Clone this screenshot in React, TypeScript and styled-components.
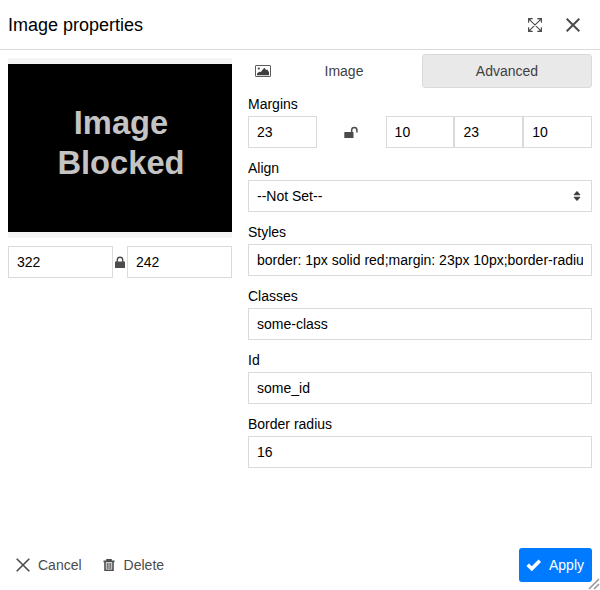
import React from "react";
import styled, { createGlobalStyle } from "styled-components";

const GlobalStyle = createGlobalStyle`
  *, *::before, *::after { box-sizing: border-box; }
  html, body { margin: 0; background: #fff; }
  body, input, button { font-family: "Liberation Sans", Arial, sans-serif; font-size: 14px; }
`;

const Dialog = styled.div`
  position: relative;
  display: flex;
  flex-direction: column;
  width: 600px;
  height: 590px;
  overflow: hidden;
  background: #fff;
  color: #000;
`;

const Header = styled.header`
  display: flex;
  align-items: center;
  justify-content: space-between;
  height: 50px;
  padding: 0 20px 0 8px;
  border-bottom: 1px solid #dadada;
`;

const Title = styled.h1`
  margin: 0;
  font-size: 18px;
  font-weight: 400;
  line-height: 22px;
`;

const HeaderActions = styled.div`
  display: flex;
  align-items: center;
  gap: 24px;
`;

const IconButton = styled.button`
  display: flex;
  padding: 0;
  border: 0;
  background: none;
  color: #4c4c4c;
`;

const Body = styled.main`
  display: grid;
  grid-template-columns: 224px 344px;
  column-gap: 16px;
  flex: 1;
  padding: 4px 8px 0;
`;

const PreviewColumn = styled.section`
  padding-top: 4px;
`;

const Preview = styled.div`
  height: 180px;
  padding: 6px 0;
  background: #f4f4f4;
`;

const Blocked = styled.div`
  display: flex;
  align-items: center;
  justify-content: center;
  height: 168px;
  padding: 0 0 10px 2px;
  background: #000;
  color: #c4c4c4;
  font-size: 32.7px;
  font-weight: 700;
  line-height: 40px;
  text-align: center;
`;

const SizeRow = styled.div`
  display: grid;
  grid-template-columns: 105px 14px 105px;
  align-items: center;
  justify-items: center;
  margin-top: 8px;
  color: #4c4c4c;
`;

const TextInput = styled.input`
  display: block;
  width: 100%;
  height: 32px;
  padding: 0 8px;
  border: 1px solid #dadada;
  border-radius: 0;
  outline: 0;
  background: #fff;
  color: #000;
`;

const Tabs = styled.div`
  display: grid;
  grid-template-columns: 1fr 1fr;
  gap: 4px;
  margin-bottom: 8px;
`;

const Tab = styled.button<{ $active?: boolean }>`
  display: flex;
  align-items: center;
  height: 34px;
  padding: 0 ${(p) => (p.$active ? "7px" : "0 0 6px")};
  border: 1px solid ${(p) => (p.$active ? "#dadada" : "transparent")};
  border-radius: 3px;
  background: ${(p) => (p.$active ? "#e9e9e9" : "transparent")};
  color: #3f3f3f;
`;

const TabLabel = styled.span`
  flex: 1;
  text-align: center;
`;

const Field = styled.div`
  margin-bottom: 12px;
`;

const Label = styled.label`
  display: block;
  height: 16px;
  margin-bottom: 4px;
  line-height: 16px;
`;

const Margins = styled.div`
  display: grid;
  grid-template-columns: repeat(5, 1fr);
  align-items: center;
  color: #4c4c4c;
`;

const LockCell = styled.div`
  display: flex;
  justify-content: center;
`;

const Select = styled.div`
  display: flex;
  align-items: center;
  justify-content: space-between;
  height: 32px;
  padding: 0 10px 0 8px;
  border: 1px solid #dadada;
`;

const Footer = styled.footer`
  display: flex;
  align-items: center;
  height: 50px;
  padding: 0 8px;
`;

const FooterButton = styled.button<{ $primary?: boolean }>`
  display: flex;
  align-items: center;
  gap: ${(p) => (p.$primary ? "7px" : "8px")};
  height: 34px;
  padding: 0 ${(p) => (p.$primary ? "8px 0 7px" : "8px")};
  margin-left: ${(p) => (p.$primary ? "auto" : "0")};
  margin-right: ${(p) => (p.$primary ? "0" : "5px")};
  border: 0;
  border-radius: 3px;
  background: ${(p) => (p.$primary ? "#007bff" : "transparent")};
  color: ${(p) => (p.$primary ? "#fff" : "#4c4c4c")};
`;

const Resizer = styled.svg`
  position: absolute;
  right: 0;
  bottom: 0;
`;

const Cross = ({ weight }: { weight: number }) => (
  <svg width="14" height="14" viewBox="0 0 14 14" fill="none" stroke="currentColor" strokeWidth={weight}>
    <path d="M.7.7 13.3 13.3M13.3.7.7 13.3" />
  </svg>
);

const Expand = () => (
  <svg width="14" height="14" viewBox="0 0 14 14" fill="none" stroke="currentColor" strokeWidth="1.1">
    <path d="M.6 4.7V.6h4.1M9.3.6h4.1v4.1M13.4 9.3v4.1H9.3M4.7 13.4H.6V9.3M.8.8l12.4 12.4M13.2.8.8 13.2" />
    <path d="M.3.3h3.9L.3 4.2ZM13.7.3v3.9L9.8.3ZM13.7 13.7H9.8l3.9-3.9ZM.3 13.7V9.8l3.9 3.9Z" fill="currentColor" fillOpacity=".45" stroke="none" />
  </svg>
);

const Picture = () => (
  <svg width="16" height="12" viewBox="0 0 16 12">
    <rect x=".5" y=".5" width="15" height="11" rx=".5" fill="none" stroke="currentColor" strokeOpacity=".85" />
    <circle cx="3.8" cy="3.5" r="1.1" fill="currentColor" />
    <path d="M2 10.2V8.4l2.3-1.7 1.5.4L9.3 2.8l1.9 2.2 1.1-.5L14 7.2v3Z" fill="currentColor" />
  </svg>
);

const Lock = () => (
  <svg width="10" height="12" viewBox="0 0 10 12">
    <path d="M2.3 6.5V4a2.7 2.7 0 0 1 5.4 0v2.5" fill="none" stroke="currentColor" strokeWidth="1.4" />
    <rect y="5.5" width="10" height="6.5" rx=".6" fill="currentColor" />
  </svg>
);

const OpenLock = () => (
  <svg width="14" height="12" viewBox="0 0 14 12">
    <path d="M7.7 6.5V4a2.6 2.6 0 0 1 5.2 0v2.4" fill="none" stroke="currentColor" strokeWidth="1.5" />
    <rect x=".3" y="6" width="9.2" height="6" rx=".5" fill="currentColor" />
  </svg>
);

const Sorter = () => (
  <svg width="8" height="10" viewBox="0 0 8 10" fill="#333" stroke="#333" strokeWidth=".8" strokeLinejoin="round">
    <path d="M4 .4 7 3.8H1ZM4 9.6 1 6.2h6Z" />
  </svg>
);

const Trash = () => (
  <svg width="12" height="12" viewBox="0 0 12 12" fill="none" stroke="currentColor">
    <path d="M.5 2.4h11M4 2V.6h4V2M2 2.8v8.5h8V2.8" strokeWidth="1.6" />
    <path d="M4.2 4v6M6 4v6M7.8 4v6" strokeWidth="1.1" />
  </svg>
);

const Check = () => (
  <svg width="16" height="12" viewBox="0 0 16 12" fill="none" stroke="currentColor" strokeWidth="3.5">
    <path d="m1.7 5.7 4.1 4.1 8-8" />
  </svg>
);

const DeleteLabel = styled.span`
  padding-left: 1px;
`;

const textFields = [
  ["Styles", "border: 1px solid red;margin: 23px 10px;border-radius: 16px"],
  ["Classes", "some-class"],
  ["Id", "some_id"],
  ["Border radius", "16"],
];

export default function App() {
  return (
    <Dialog>
      <GlobalStyle />
      <Header>
        <Title>Image properties</Title>
        <HeaderActions>
          <IconButton aria-label="Fullsize"><Expand /></IconButton>
          <IconButton aria-label="Close"><Cross weight={2} /></IconButton>
        </HeaderActions>
      </Header>
      <Body>
        <PreviewColumn>
          <Preview>
            <Blocked>Image<br />Blocked</Blocked>
          </Preview>
          <SizeRow>
            <TextInput defaultValue="322" />
            <Lock />
            <TextInput defaultValue="242" />
          </SizeRow>
        </PreviewColumn>
        <section>
          <Tabs>
            <Tab><Picture /><TabLabel>Image</TabLabel></Tab>
            <Tab $active><TabLabel>Advanced</TabLabel></Tab>
          </Tabs>
          <Field>
            <Label>Margins</Label>
            <Margins>
              <TextInput defaultValue="23" />
              <LockCell><OpenLock /></LockCell>
              <TextInput defaultValue="10" />
              <TextInput defaultValue="23" />
              <TextInput defaultValue="10" />
            </Margins>
          </Field>
          <Field>
            <Label>Align</Label>
            <Select>--Not Set--<Sorter /></Select>
          </Field>
          {textFields.map(([label, value]) => (
            <Field key={label}>
              <Label>{label}</Label>
              <TextInput defaultValue={value} />
            </Field>
          ))}
        </section>
      </Body>
      <Footer>
        <FooterButton><Cross weight={1.6} />Cancel</FooterButton>
        <FooterButton><Trash /><DeleteLabel>Delete</DeleteLabel></FooterButton>
        <FooterButton $primary><Check />Apply</FooterButton>
      </Footer>
      <Resizer width="12" height="12" viewBox="0 0 12 12" stroke="#999" strokeWidth="1.6">
        <path d="M1 11 11 1M6 11l5-5" />
      </Resizer>
    </Dialog>
  );
}
